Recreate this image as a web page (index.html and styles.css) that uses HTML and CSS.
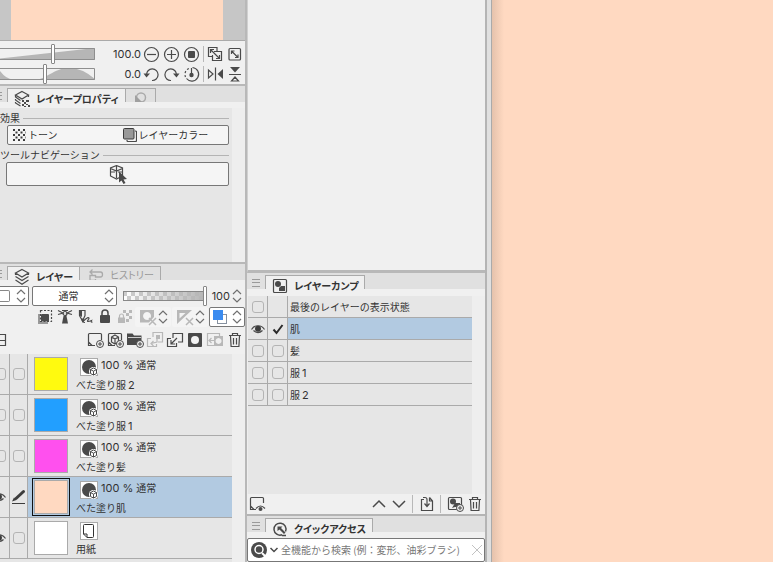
FILE: index.html
```html
<!DOCTYPE html>
<html lang="ja">
<head>
<meta charset="utf-8">
<title>レイヤー</title>
<link rel="stylesheet" href="styles.css">
</head>
<body>
<svg class="defs" aria-hidden="true">
  <symbol id="updown" viewBox="0 0 10 16"><path fill="none" stroke="#707070" stroke-width="1.200" d="M1 6 5 2 9 6M1 10 5 14 9 10"/></symbol>
  <symbol id="plus" viewBox="0 0 8 8"><circle cx="4" cy="4" r="3.500" fill="#f0f0f0" stroke="#4a4a4a"/><path d="M4 2v4M2 4h4" stroke="#4a4a4a"/></symbol>
  <symbol id="trash" viewBox="0 0 20 20"><path class="l" d="M4 5.500h12M7.500 5.500v-2h5v2M5.500 6l.6 10.500h7.800L14.500 6M8.500 8v6.500M11.500 8v6.500"/></symbol>
  <symbol id="tone-mark" viewBox="0 0 18 18"><rect x=".5" y=".5" width="17" height="17" fill="#fff" stroke="#aaa"/><circle cx="9" cy="9" r="7" fill="#4a4a4a"/><circle cx="13.500" cy="13.500" r="4.500" fill="#fff"/><path d="m13.500 10 3 1.500v4l-3 1.500-3-1.500v-4zM10.500 11.500l3 1.700 3-1.700M13.500 13.200V17" fill="none" stroke="#4a4a4a"/></symbol>
  <symbol id="eye" viewBox="0 0 14 12"><path class="l" d="M.5 6.500C3.500 1.500 10.500 1.500 13.500 6.500M2.500 7.500q4.500 4 9 0"/><circle cx="7" cy="5.800" r="3" fill="#3c3c3c"/></symbol>
  <symbol id="layers" viewBox="0 0 16 18"><path class="l" d="M8 1.500 14.500 5 8 9 1.500 5zM1.500 8.500 8 12.500l6.500-4M1.500 12 8 16.200l6.500-4.200M1.500 5v2M14.500 5v2"/></symbol>
  <symbol id="grip" viewBox="0 0 8 10"><path d="M0 1.500h8M0 4.500h8M0 8.500h8" stroke="#9a9a9a"/></symbol>
</svg>

<div class="app">
  <aside class="left">
    <section class="navigator">
      <div class="preview"><div class="sheet"></div></div>
      <div class="view-controls">
        <div class="view-row">
          <div class="curve"><svg viewBox="0 0 95 12"><path d="M0 10.500 95 0v12H0z" fill="#b6b6b6"/><path d="M0 .5h94.500v11H0" fill="none" stroke="#8e8e8e"/></svg><input type="range" aria-label="拡大・縮小" value="56"></div>
          <output>100.0</output>
          <button class="tool" aria-label="ズームアウト"><svg viewBox="0 0 20 20"><circle class="l" cx="9.500" cy="10.500" r="7"/><path class="l" d="M5 10.500h9"/></svg></button>
          <button class="tool" aria-label="ズームイン"><svg viewBox="0 0 20 20"><circle class="l" cx="9.500" cy="10.500" r="7"/><path class="l" d="M5 10.500h9M9.500 6v9"/></svg></button>
          <button class="tool" aria-label="等倍"><svg viewBox="0 0 20 20"><circle class="l" cx="9.500" cy="10.500" r="7"/><rect class="f" x="6" y="7" width="7" height="7" rx="1"/></svg></button>
          <i class="rule"></i>
          <button class="tool" aria-label="フィッティング"><svg viewBox="0 0 20 20"><path class="l" d="M12 7V3.500H3.500v9H7M9 7.500h7.500v9h-9V11M5.500 5.500l9 9M5.500 9V5.500H9M11 14.500h3.500V11"/></svg></button>
          <button class="tool" aria-label="全体表示"><svg viewBox="0 0 20 20"><rect class="l" x="4" y="4.500" width="11.500" height="11.500" rx="1"/><path class="l" d="m6.500 7 6.500 6.500M6.500 10V7h3M10 13.500h3v-3"/></svg></button>
        </div>
        <div class="view-row">
          <div class="curve"><svg viewBox="0 0 95 12"><path d="M0 3q6 8 13 8.500H0zM32 12C48 12 52 0 70 0q12 0 25 11v1z" fill="#b6b6b6"/><path d="M0 .5h94.500v11H0" fill="none" stroke="#8e8e8e"/></svg><input type="range" aria-label="回転" value="47"></div>
          <output>0.0</output>
          <button class="tool" aria-label="左回転"><svg viewBox="0 0 20 20"><path class="l" d="M4.500 11a5.800 5.800 0 1 1 5.500 5.500"/><path class="f" d="M1.500 9.500h6.500l-3.500 4z"/></svg></button>
          <button class="tool" aria-label="右回転"><svg viewBox="0 0 20 20"><path class="l" d="M14.500 11a5.800 5.800 0 1 0-5.500 5.500"/><path class="f" d="M11 9.500h6.500l-3 4z"/></svg></button>
          <button class="tool" aria-label="回転をリセット"><svg viewBox="0 0 20 20"><path class="l" d="M10.500 3.500A6.800 6.800 0 1 1 4.500 14.500M9.500 4v7"/><path class="l" stroke-dasharray="2 2" d="M3.500 13A6.500 6.500 0 0 1 8.500 4"/><circle class="f" cx="9.500" cy="11" r="2.200"/></svg></button>
          <i class="rule"></i>
          <button class="tool" aria-label="左右反転"><svg viewBox="0 0 20 20"><path class="l" d="M3.500 6v8L8 10zM10.500 3.500v13"/><path class="f" d="M18 5v10l-5.500-5z"/></svg></button>
          <button class="tool" aria-label="上下反転"><svg viewBox="0 0 20 20"><path class="l" d="M4 10.500h12M6.500 17h7L10 13z"/><path class="f" d="M5 3h10l-5 5.500z"/></svg></button>
        </div>
      </div>
    </section>

    <section class="properties">
      <div class="tabs">
        <span class="grip cut"><svg viewBox="0 0 2 10"><path d="M0 1.500h2M0 4.500h2M0 8.500h2" stroke="#9a9a9a"/></svg></span>
        <button class="tab on"><svg viewBox="0 0 16 18"><path class="l" d="M8 1.500 14.500 5 8 9 1.500 5zM1.500 5v2l5 3.500M14.500 5v2M1.500 9v1l5 3.500M1.500 12v1l5 3"/><path class="f" d="M8 10h2v2H8zM12 10h3v2h-3zM10 12h2v2h-2zM8 14h2v2H8zM12 14h2v1h-2zM14 15h2v2h-2zM10 16h2v1h-2z"/></svg>レイヤープロパティ</button>
        <button class="tab small" aria-label="ツール"><svg viewBox="0 0 16 14"><circle cx="9" cy="7.500" r="4.500" fill="none" stroke="#aaa" stroke-width="1.500"/><path d="M3 5l8.500 8.500H3z" fill="#a0a0a0"/></svg></button>
      </div>
      <div class="scrolled grow">
        <div class="property-list">
          <h2>効果</h2>
          <div class="effects">
            <button><svg viewBox="0 0 14 14"><path stroke="#3c3c3c" stroke-width="2" stroke-dasharray="2 3" d="M1 2h12M1 7h12M1 12h12"/><path stroke="#3c3c3c" stroke-width="2" stroke-dasharray="2 3" d="M3.500 4.500H14M3.500 9.500H14"/></svg>トーン</button>
            <button><svg viewBox="0 0 14 14"><path class="l" d="M12 3h.5q1 0 1 1v8.500q0 1-1 1H5q-1 0-1-1V12"/><rect x=".5" y=".5" width="10.500" height="10.500" rx="1" fill="#999" stroke="#3c3c3c"/></svg>レイヤーカラー</button>
          </div>
          <h2>ツールナビゲーション</h2>
          <button class="wide" aria-label="オブジェクト"><svg viewBox="0 0 18 20"><path class="l" d="M7.500 1.500 13.500 4v8M7.500 1.500 1.500 4v8l6 3 3-1.500M1.500 4.500l6 2.500 6-2.500M7.500 2v12M2 8h4M9 8h4"/><path class="f" d="m10 7.500 8 7.500-3.500.5 2 3.500-2 1-2-3.500-2.500 2z"/></svg></button>
        </div>
      </div>
    </section>

    <section class="layers grow">
      <div class="tabs">
        <span class="grip cut"><svg viewBox="0 0 2 10"><path d="M0 1.500h2M0 4.500h2M0 8.500h2" stroke="#9a9a9a"/></svg></span>
        <button class="tab on"><svg><use href="#layers"/></svg>レイヤー</button>
        <button class="tab history"><svg viewBox="0 0 16 14"><path d="M4.500 1.500 2 4l2.500 2.500M2 4h10.500q2 0 2 2.500t-2 2.500H7.500V7.500H2v5h5.500V11" fill="none" stroke="#aaa" stroke-width="1.300"/></svg>ヒストリー</button>
      </div>
      <div class="blend">
        <button class="field palette-color" aria-label="パレットカラー"><i></i><svg><use href="#updown"/></svg></button>
        <label class="field mode"><select aria-label="合成モード"><option>通常</option></select><svg><use href="#updown"/></svg></label>
        <input class="opacity" type="range" value="100" aria-label="不透明度">
        <output>100</output>
        <svg class="step"><use href="#updown"/></svg>
      </div>
      <div class="bar">
        <button class="tool" aria-label="クリッピング"><svg viewBox="0 0 20 20"><path d="M4 7v9h9" fill="none" stroke="#999" stroke-width="2"/><rect class="f" x="6" y="7" width="8" height="7.500" rx="1"/><rect class="l" x="5.500" y="3.500" width="11" height="11" stroke-dasharray="2 1.500"/></svg></button>
        <button class="tool" aria-label="参照レイヤー"><svg viewBox="0 0 20 20"><circle class="l" cx="10" cy="6.500" r="2"/><path class="f" d="M8.500 9h3l1.500 7.500H7z"/><path class="l" d="M3 3.500 8 6 3 7.500M17 3.500 12 6l5 1.500M7 3.500h6"/></svg></button>
        <button class="tool" aria-label="下描き"><svg viewBox="0 0 20 20"><path class="l" d="M4.500 3.500h5.500v5L7.500 14 4.500 8.500zM10 15.500q-3 0-1-2t4-3q2 0 0 2.500t3.500.5q-1 2 1 1.500"/><path class="f" d="M4 3h3v7L4 8zM6 11.500h3L7.500 16z"/></svg></button>
        <button class="tool" aria-label="ロック"><svg viewBox="0 0 20 20"><rect class="f" x="5" y="8" width="10" height="8" rx="1"/><path class="l thick" d="M7 8V6a3 3 0 0 1 6 0v2"/></svg></button>
        <button class="tool" disabled aria-label="透明ピクセルをロック"><svg viewBox="0 0 20 20"><path class="f" d="M3 10.500h7V16H3zM8 3h3v3H8zM14 3h3v3h-3zM11 6h3v3h-3zM14 9h3v3h-3zM11 12h3v3h-3z"/><path class="l" d="M4.500 11V9a2 2 0 0 1 4 0v2"/></svg></button>
        <button class="pair" disabled aria-label="マスク"><svg class="big" viewBox="0 0 18 18"><path class="f" fill-rule="evenodd" d="M1 2h14v7l-5 5.500H1zM8 4a4 4 0 1 0 .1 0z"/><path class="l thick" d="m10 10 7 7M17 10l-7 7"/></svg><svg><use href="#updown"/></svg></button>
        <button class="pair" disabled aria-label="定規"><svg class="big" viewBox="0 0 18 18"><path class="f" fill-rule="evenodd" d="M1 2h15L1 16zM3.500 5v5.500l6-5.500z"/><path class="l thick" d="m10 10 7 7M17 10l-7 7"/></svg><svg><use href="#updown"/></svg></button>
        <button class="pair field" aria-label="レイヤーカラーを変更"><svg class="big" viewBox="0 0 18 18"><rect x="7.500" y="6.500" width="9" height="9" fill="#fff" stroke="#8792a0"/><rect x="3" y="2" width="10" height="10" fill="#3a8bf0"/></svg><svg><use href="#updown"/></svg></button>
      </div>
      <div class="bar lower">
        <button class="panes" aria-label="2ペイン表示"><svg viewBox="0 0 7 20"><path class="l" d="M0 4.500h5.500v11H0M0 10.500h5"/></svg></button>
        <button class="tool" aria-label="新規ラスターレイヤー"><svg viewBox="0 0 20 20"><path class="l" d="M10 15.500H7L3.500 12V4.500q0-1 1-1h11q1 0 1 1V10M3.500 15.500V12L7 15.500z"/><use href="#plus" x="11" y="10" width="8" height="8"/></svg></button>
        <button class="tool" aria-label="新規3Dレイヤー"><svg viewBox="0 0 20 20"><path class="l" d="M10 15.500H7L3.500 12V4.500q0-1 1-1h11q1 0 1 1V10M3.500 15.500V12L7 15.500z"/><path class="l" d="m10 5 3.500 2v5L10 14l-3.500-2V7zM6.500 7 10 9l3.500-2M10 9v5"/><use href="#plus" x="11" y="10" width="8" height="8"/></svg></button>
        <button class="tool" aria-label="新規フォルダー"><svg viewBox="0 0 20 20"><path class="f" d="M2 3.500h5.500L9 5.500h7.500v9.500H2z"/><path d="M3 7.500h13" stroke="#ccc"/><use href="#plus" x="11" y="10" width="8" height="8"/></svg></button>
        <button class="tool" disabled aria-label="下のレイヤーに転写"><svg viewBox="0 0 20 20"><path class="l" d="M8 7V2.500h9.500V12H13M6 8.500H2.500v8h9V14"/><path class="f" d="M11 5h4v4h-4z"/><path class="l" d="M12 8.500v3.500L6 13.500M8.500 11 6 13.500 8.500 16"/></svg></button>
        <button class="tool" aria-label="下のレイヤーに結合"><svg viewBox="0 0 20 20"><path class="l" d="M8 8V3.500h9.500V12H13M6 8.500H2.500v8h9V13M12 8l-6 6M6 10v4h4"/></svg></button>
        <button class="tool" aria-label="レイヤーマスクを作成"><svg viewBox="0 0 20 20"><rect class="f" x="3" y="3" width="14" height="14" rx="1"/><circle cx="10" cy="10" r="4" fill="#f4f4f4"/></svg></button>
        <button class="tool" disabled aria-label="マスクを適用"><svg viewBox="0 0 20 20"><path class="l" d="M9 15.500H2.500v-12h12V6M4 10.500h5M6.500 8 4 10.500 6.500 13"/><path class="f" fill-rule="evenodd" d="M9 6h9v10H9zM13.500 8a3 3 0 1 0 .1 0z"/></svg></button>
        <button class="tool" aria-label="レイヤーを削除"><svg><use href="#trash"/></svg></button>
      </div>
      <div class="scrolled grow">
        <ul class="layer-list">
          <li><span class="vis"><input type="checkbox" aria-label="表示"></span><span class="mark"><input type="checkbox" aria-label="選択"></span><i class="thumb yellow"></i><div class="info"><p><svg><use href="#tone-mark"/></svg><b>100 %</b>通常</p><p>べた塗り服<b>2</b></p></div></li>
          <li><span class="vis"><input type="checkbox" aria-label="表示"></span><span class="mark"><input type="checkbox" aria-label="選択"></span><i class="thumb blue"></i><div class="info"><p><svg><use href="#tone-mark"/></svg><b>100 %</b>通常</p><p>べた塗り服<b>1</b></p></div></li>
          <li><span class="vis"><input type="checkbox" aria-label="表示"></span><span class="mark"><input type="checkbox" aria-label="選択"></span><i class="thumb pink"></i><div class="info"><p><svg><use href="#tone-mark"/></svg><b>100 %</b>通常</p><p>べた塗り髪</p></div></li>
          <li class="current"><span class="vis"><svg class="eye"><use href="#eye"/></svg></span><span class="mark"><svg class="pen" viewBox="0 0 16 16"><path d="M5 9.500 12.500 2.500" stroke="#3c3c3c" stroke-width="3" stroke-linecap="round"/><path d="M3 8.500 5.500 11 1 12.500z" fill="#3c3c3c"/><path d="M1 14.500h13" stroke="#3c3c3c"/></svg></span><i class="thumb skin"></i><div class="info"><p><svg><use href="#tone-mark"/></svg><b>100 %</b>通常</p><p>べた塗り肌</p></div></li>
          <li><span class="vis"><svg class="eye"><use href="#eye"/></svg></span><span class="mark"><input type="checkbox" aria-label="選択"></span><i class="thumb paper"></i><div class="info"><p><svg viewBox="0 0 18 18"><rect x=".5" y=".5" width="17" height="17" fill="#fff" stroke="#aaa"/><path d="M3.500 3.500q0-1 1-1h8q1 0 1 1v11q0 1-1 1H7L3.500 12zM3.500 12H7v3.500" fill="#fff" stroke="#333"/></svg></p><p>用紙</p></div></li>
        </ul>
      </div>
    </section>
  </aside>

  <aside class="middle">
    <div class="blank"></div>
    <section class="comps">
      <div class="tabs">
        <span class="grip"><svg><use href="#grip"/></svg></span>
        <button class="tab on"><svg viewBox="0 0 16 18"><rect class="l" x="1.500" y="2.500" width="13" height="13" rx="1"/><circle class="f" cx="6" cy="7" r="3"/><path class="f" d="M9 9h4v5H7v-3z"/></svg>レイヤーカンプ</button>
      </div>
      <div class="scrolled">
        <ul class="comp-list">
          <li><span><input type="checkbox" aria-label="表示"></span><span></span><p>最後のレイヤーの表示状態</p></li>
          <li class="current"><span><svg class="eye"><use href="#eye"/></svg></span><span><svg class="tick" viewBox="0 0 12 12"><path d="m1.500 6.500 3 3.500L10.500 2" fill="none" stroke="#2c2c2c" stroke-width="2"/></svg></span><p>肌</p></li>
          <li><span><input type="checkbox" aria-label="表示"></span><span><input type="checkbox" aria-label="適用"></span><p>髪</p></li>
          <li><span><input type="checkbox" aria-label="表示"></span><span><input type="checkbox" aria-label="適用"></span><p>服<b>1</b></p></li>
          <li><span><input type="checkbox" aria-label="表示"></span><span><input type="checkbox" aria-label="適用"></span><p>服<b>2</b></p></li>
        </ul>
      </div>
      <div class="comp-tools">
        <button class="tool first" aria-label="表示状態"><svg viewBox="0 0 20 20"><path class="l" d="M9 15.500H7L3.500 12V4.500q0-1 1-1h11q1 0 1 1V9M3.500 15.500V12L7 15.500z"/><path class="l" d="M9 14.500q4.500-5 9 0"/><circle class="f" cx="13.500" cy="15" r="2"/></svg></button>
        <button class="tool" aria-label="前へ"><svg viewBox="0 0 20 20"><path class="l thick" d="m4 13 6-6 6 6"/></svg></button>
        <button class="tool" aria-label="次へ"><svg viewBox="0 0 20 20"><path class="l thick" d="m4 7 6 6 6-6"/></svg></button>
        <i class="rule"></i>
        <button class="tool" aria-label="更新"><svg viewBox="0 0 20 20"><path class="l" d="M7 5.500H4.500v11h11V7l-3-3.500M12.500 3.500V7h3M6 3.500h2q2 0 2 2V12M7.500 9.500 10 12.500l2.500-3"/></svg></button>
        <i class="rule"></i>
        <button class="tool" aria-label="レイヤーカンプを追加"><svg viewBox="0 0 20 20"><rect class="l" x="3.500" y="3.500" width="13" height="12" rx="1"/><circle class="f" cx="8" cy="7.500" r="3"/><path class="f" d="M10 9h5v4h-5l-3 1z"/><use href="#plus" x="11" y="10" width="8" height="8"/></svg></button>
        <button class="tool" aria-label="削除"><svg><use href="#trash"/></svg></button>
      </div>
    </section>
    <section class="quick">
      <div class="tabs">
        <span class="grip"><svg><use href="#grip"/></svg></span>
        <button class="tab on"><svg viewBox="0 0 16 18"><path class="l thick" d="M10 14.800A6 6 0 1 1 13.500 11.500M10 15.500h4"/><path class="f" d="M5.500 6.500h5L9 8l4.500 4.500-1.500 1.500L7.500 9.500l-2 1.500z"/></svg>クイックアクセス</button>
      </div>
      <div class="search">
        <svg class="lens" viewBox="0 0 17 17"><circle cx="8" cy="8" r="8" fill="#4a4a4a"/><circle cx="8" cy="7.500" r="4" fill="none" stroke="#fff" stroke-width="1.500"/><path d="m11 11 5 5" stroke="#fff" stroke-width="2"/></svg>
        <svg class="drop" viewBox="0 0 10 8"><path class="l thick" d="m1.500 2 3.500 3.500L8.500 2"/></svg>
        <input type="text" placeholder="全機能から検索 (例：変形、油彩ブラシ)" aria-label="検索">
        <button aria-label="クリア"><svg viewBox="0 0 12 12"><path d="m1 1 10 10M11 1 1 11" stroke="#c2c2c2"/></svg></button>
      </div>
    </section>
  </aside>
  <div class="gutter"></div>
  <main class="canvas"></main>
</div>
</body>
</html>
```

FILE: styles.css
```css
* { box-sizing: border-box; }
body {
  margin: 0;
  background: #f0f0f0;
  color: #333;
  font: 10px/14px "Noto Sans CJK JP", sans-serif;
}
button, input, select { font: inherit; color: inherit; margin: 0; padding: 0; }
button { background: none; border: 0; }
p, h2, ul { margin: 0; padding: 0; font: inherit; }
ul { list-style: none; }
svg { display: block; flex: none; }
output, b { font: 11px/14px Inter, sans-serif; }
.defs { position: absolute; width: 0; height: 0; }
.l { fill: none; stroke: #4a4a4a; stroke-width: 1.2; }
.f { fill: #4a4a4a; }
.thick { stroke-width: 1.5; }
.grow { flex: 1; min-height: 0; }

.app { display: flex; height: 100vh; overflow: hidden; }
.left {
  display: flex;
  flex-direction: column;
  flex: none;
  width: 247px;
  border-right: 2px solid #b8b8b8;
}
.middle {
  display: flex;
  flex-direction: column;
  flex: none;
  width: 240px;
  border-right: 2px solid #b4b4b4;
}
.gutter { flex: none; width: 5px; background: #e0e0e0; border-right: 1px solid #aaa; }
.canvas {
  flex: 1;
  background: linear-gradient(90deg, #e5c2ac, #ffd9c1 12px);
}

/* navigator */
.preview { height: 41px; padding: 0 22px 0 11px; background: #c6c6c6; border-bottom: 1px solid #aaa; }
.sheet { height: 100%; background: #ffd9c1; }
.view-controls { padding-top: 3px; border-bottom: 2px solid #b8b8b8; }
.view-row { display: flex; align-items: center; height: 20px; }
.curve { position: relative; width: 95px; height: 20px; padding: 4px 0; }
.curve svg { width: 95px; height: 12px; }
.curve input { position: absolute; left: 0; top: 0; width: 100%; height: 20px; }
.view-row output { flex: 1; padding-right: 1px; text-align: right; }
.tool { width: 20px; height: 20px; flex: none; }
.tool svg { width: 20px; height: 20px; }
.rule { width: 1px; height: 16px; margin: 0 1px; background: #b8b8b8; }
input[type="range"] { appearance: none; background: none; }
input[type="range"]::-webkit-slider-thumb {
  appearance: none;
  width: 4px;
  height: 20px;
  background: #fff;
  border: 1px solid #888;
  border-radius: 1px;
}

/* tabs */
.tabs {
  display: flex;
  height: 22px;
  padding-top: 2px;
  background: linear-gradient(#e0e0e0 16px, #f0f0f0 16px);
}
.grip { width: 18px; padding: 3px 5px; }
.grip svg { width: 8px; height: 10px; }
.grip.cut { width: 7px; padding: 3px 0; }
.grip.cut svg { width: 2px; }
.tab {
  display: flex;
  align-items: center;
  gap: 6px;
  height: 14px;
  padding: 2px 6px 0;
  border: 1px solid #aaa;
  border-bottom: 0;
  white-space: nowrap;
  font-feature-settings: "palt";
}
.tab svg { width: 16px; height: 18px; }
.tab.on {
  height: 20px;
  border: 0;
  background:
    linear-gradient(#aaa, #aaa) 0 0 / 100% 1px no-repeat,
    linear-gradient(#aaa, #aaa) 0 0 / 1px 14px no-repeat,
    linear-gradient(#aaa, #aaa) 100% 0 / 1px 14px no-repeat,
    #f0f0f0;
  padding: 2px 7px 0;
  font-weight: 700;
}
.tab.small, .tab.history { margin-left: -1px; }
.tab.small svg, .tab.history svg { height: 14px; }
.tab.small { width: 31px; overflow: hidden; }
.tab.history { padding-left: 8px; color: #999; overflow: hidden; }

/* layer properties */
.properties { display: flex; flex-direction: column; height: 178px; border-bottom: 2px solid #b8b8b8; }
.scrolled { padding-right: 13px; background: #eee; }
.property-list { height: 100%; padding: 3px 3px 0 0; background: #e6e6e6; }
.property-list h2 { display: flex; align-items: center; gap: 3px; height: 14px; }
.property-list h2::after { content: ""; flex: 1; height: 1px; background: #b4b4b4; }
.effects, .wide {
  display: flex;
  width: calc(100% - 7px);
  margin: 0 0 12px 7px;
  background: #f5f5f5;
  border: 1px solid #777;
  border-radius: 2px;
}
.effects { height: 20px; }
.effects button { display: flex; flex: 1; align-items: center; gap: 2px; padding-left: 4px; }
.effects svg { width: 14px; height: 14px; }
.effects button + button { padding-left: 5px; }
.property-list h2 + .effects { margin-bottom: 3px; }
.wide { width: calc(100% - 6px); height: 24px; margin-left: 6px; align-items: center; justify-content: center; }
.wide svg { width: 18px; height: 20px; }

/* layers */
.layers { display: flex; flex-direction: column; }
.field { display: flex; align-items: center; background: #fff; border: 1px solid #777; border-radius: 2px; }
.field > svg, .step, .pair svg { width: 10px; height: 16px; }
.blend { display: flex; align-items: center; height: 20px; padding-right: 3px; }
.palette-color { width: 29px; height: 20px; justify-content: space-between; padding-right: 2px; border-left: 0; border-radius: 0 2px 2px 0; }
.palette-color i { width: 10px; height: 12px; border: 1px solid #888; border-left: 0; border-radius: 0 2px 2px 0; }
.mode { width: 85px; height: 20px; margin: 0 6px 0 3px; padding-right: 2px; }
.mode select { flex: 1; appearance: none; background: none; border: 0; text-align: center; }
input.opacity[type="range"] {
  width: 84px;
  height: 20px;
  background:
    linear-gradient(#888, #888) 0 5px / 82px 1px no-repeat,
    linear-gradient(#888, #888) 0 14px / 82px 1px no-repeat,
    linear-gradient(#888, #888) 0 5px / 1px 10px no-repeat,
    linear-gradient(90deg, #bbb0, #b6b6b6) 0 6px / 82px 8px no-repeat,
    repeating-conic-gradient(#fff 0 25%, #ccc 0 50%) 0 6px / 8px 8px repeat-x;
}
.blend output { flex: 1; text-align: right; padding-right: 2px; }
.bar { display: flex; height: 20px; align-items: center; justify-content: flex-end; margin-top: 1px; }
.pair { display: flex; align-items: center; width: 36px; height: 20px; padding-left: 4px; margin-right: 1px; border-radius: 2px; }
.pair .big { width: 18px; height: 18px; margin-right: 1px; }
.pair:disabled { background: #f4f4f4; }
.pair.field { margin-right: 0; padding-left: 0; }
.pair.field .big { margin-right: 4px; }
:disabled .l { stroke: #b8b8b8; }
:disabled .f { fill: #b8b8b8; }
.lower { margin: 3px 0 4px; }
.panes { margin-right: auto; }
.panes svg { width: 7px; height: 20px; }

input[type="checkbox"] { appearance: none; width: 12px; height: 12px; border: 1px solid #b4b4b4; border-radius: 3px; flex: none; }
.eye { width: 14px; height: 12px; }
.layer-list { height: 100%; background: #e6e6e6; }
.layer-list li { display: flex; height: 41px; border-bottom: 1px solid #aaa; }
.vis, .mark { display: flex; align-items: center; border-right: 1px solid #aaa; overflow: hidden; flex: none; }
.vis { width: 10px; justify-content: flex-end; padding-right: 3px; }
.mark { width: 18px; justify-content: center; }
.pen { width: 16px; height: 16px; }
.thumb { width: 34px; height: 34px; margin: 3px 8px 0 6px; border: 1px solid #aaa; flex: none; }
.yellow { background: #fffa0f; }
.blue { background: #229fff; }
.pink { background: #ff50ee; }
.skin { background: #ffd9c1; }
.paper { background: #fff; }
.current .thumb { outline: 1px solid #111; outline-offset: 1px; }
.info { padding-top: 4px; white-space: nowrap; }
.info p { display: flex; align-items: center; height: 17px; }
.info p:first-child { gap: 3px; height: 18px; padding-left: 4px; align-items: flex-start; }
.info svg { width: 18px; height: 18px; }
.info p + p b, .comp-list b { padding-left: 2px; }
.layer-list .current { background: linear-gradient(90deg, #e6e6e6 28px, #b2cae1 28px); }

/* layer comps */
.blank { flex: 1; min-height: 0; border-bottom: 3px solid #b8b8b8; border-left: 1px solid #d0d0d0; }
.comps .tabs { height: 23px; }
.comp-list { height: 198px; margin-left: 1px; background: #e6e6e6; }
.comp-list li { display: flex; height: 22px; border-bottom: 1px solid #aaa; }
.comp-list span { display: flex; width: 20px; align-items: center; justify-content: center; border-right: 1px solid #aaa; }
.comp-list p { flex: 1; display: flex; align-items: center; padding-left: 2px; }
.comp-list .current p { background: #b2cae1; }
.tick { width: 12px; height: 12px; }
.comp-tools { display: flex; align-items: center; height: 20px; }
.comp-tools .first { margin-right: auto; }
.comp-tools .rule { margin: 0 4px 0 3px; height: 18px; }

/* quick access */
.quick { border-top: 2px solid #b4b4b4; }
.search { display: flex; align-items: center; height: 24px; padding: 0 1px 0 3px; background: #fff; border: 1px solid #777; border-radius: 2px; }
.lens { width: 17px; height: 17px; }
.drop { width: 10px; height: 8px; margin: 0 2px 0 1px; }
.search input { flex: 1; min-width: 0; border: 0; outline: 0; background: none; }
.search input::placeholder { color: #777; }
.search button svg { width: 12px; height: 12px; }
```
